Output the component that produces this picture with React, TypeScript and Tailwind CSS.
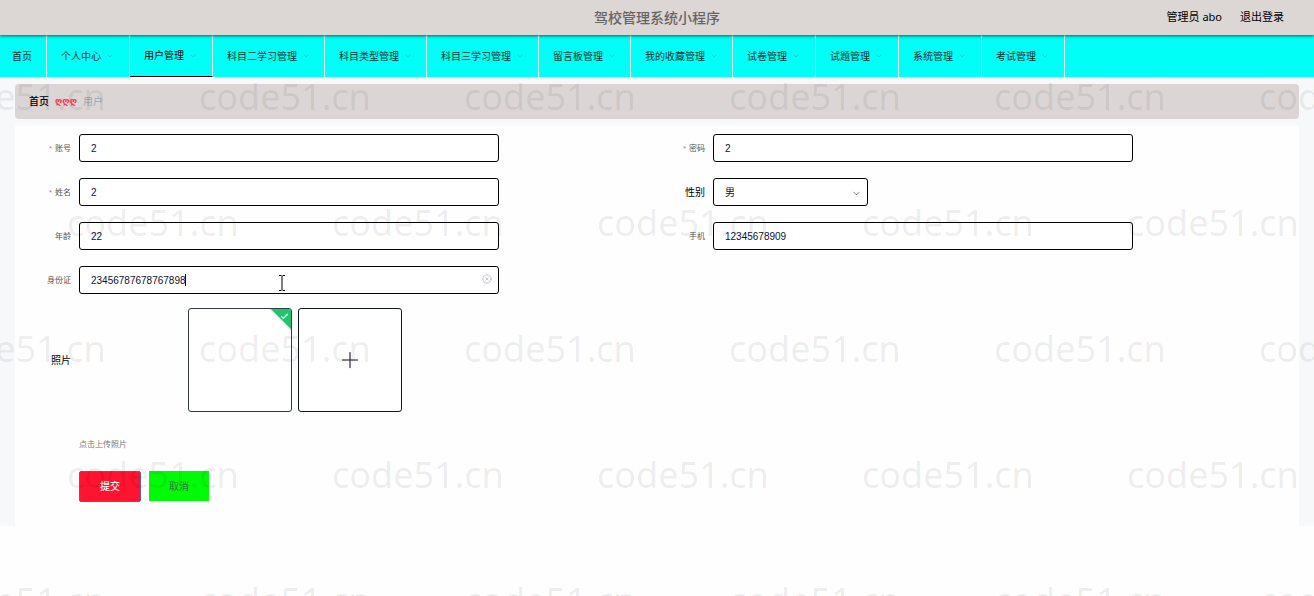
import { ReactNode } from "react";
import { Check, ChevronDown, CircleX, Plus } from "lucide-react";

const menus = [
  "个人中心",
  "用户管理",
  "科目二学习管理",
  "科目类型管理",
  "科目三学习管理",
  "留言板管理",
  "我的收藏管理",
  "试卷管理",
  "试题管理",
  "系统管理",
  "考试管理",
];

const inputClass =
  "h-7 w-full rounded-[3px] border border-black bg-white px-[11px] font-['Liberation_Sans','Noto_Sans_CJK_SC',sans-serif] text-[10px] text-[#101030] outline-none";

function Row({
  id,
  label,
  required,
  strong,
  children,
}: {
  id: string;
  label: string;
  required?: boolean;
  strong?: boolean;
  children: ReactNode;
}) {
  return (
    <div className="flex items-center gap-2">
      <label
        htmlFor={id}
        className={
          strong
            ? "w-14 shrink-0 text-right text-[10px] text-black"
            : "w-14 shrink-0 text-right text-[8px] text-[#555]"
        }
      >
        {required && (
          <span className="mr-[3px] font-['Liberation_Sans',sans-serif] text-[#f56c6c]">*</span>
        )}
        {label}
      </label>
      {children}
    </div>
  );
}

function TextField({
  id,
  label,
  value,
  required,
}: {
  id: string;
  label: string;
  value: string;
  required?: boolean;
}) {
  return (
    <Row id={id} label={label} required={required}>
      <div className="w-full max-w-[420px]">
        <input id={id} defaultValue={value} className={inputClass} />
      </div>
    </Row>
  );
}

function Watermark() {
  return (
    <div
      aria-hidden="true"
      className="pointer-events-none absolute inset-0 overflow-hidden pt-[34px] font-['Noto_Sans',sans-serif] text-[36px] leading-[126px] text-black/[0.08]"
    >
      {[0, 1, 2, 3, 4].map((row) => (
        <div
          key={row}
          className={row % 2 ? "ml-[67px] flex" : "-ml-[66px] flex"}
        >
          {[0, 1, 2, 3, 4, 5].slice(0, row % 2 ? 5 : 6).map((n) => (
            <span key={n} className="w-[265px] shrink-0">
              code51.cn
            </span>
          ))}
        </div>
      ))}
    </div>
  );
}

export default function App() {
  return (
    <div className="relative min-h-screen overflow-hidden bg-[#fefefe] font-['Noto_Sans','Noto_Sans_CJK_SC',sans-serif] text-[10px] text-black">
      <header className="relative z-10 grid h-[35px] grid-cols-[1fr_auto_1fr] items-center bg-[#dcd6d5] px-[30px] shadow-[0_1px_3px_rgba(0,0,0,0.6)]">
        <h1 className="col-start-2 text-[14px] font-medium text-[#686464]">驾校管理系统小程序</h1>
        <div className="flex justify-end gap-[18px] text-[11px]">
          <span>管理员 abo</span>
          <a href="#logout">退出登录</a>
        </div>
      </header>

      <nav className="flex h-[42px] bg-[#00fff6] text-[#103030]">
        <a href="#home" className="flex items-center border-r border-white/90 pr-3.5 pl-3">
          首页
        </a>
        {menus.map((name) => (
          <a
            key={name}
            href={"#" + name}
            className={
              name === "用户管理"
                ? "flex min-w-[83px] items-center gap-[5px] border-r border-b border-r-white/90 border-b-black px-[14px] text-black"
                : "flex min-w-[83px] items-center gap-[5px] border-r border-white/90 px-[14px]"
            }
          >
            {name}
            <ChevronDown size={8} strokeWidth={2} className="shrink-0 text-[#10bcc6]" />
          </a>
        ))}
      </nav>

      <main className="bg-[#f6f8fa] px-[15px] pt-[7px]">
        <div className="flex h-[35px] items-center rounded bg-[#dbd5d5] px-[14px]">
          <a href="#home" className="font-medium">首页</a>
          <span className="mx-[6px] font-['DejaVu_Sans',sans-serif] text-[9px] font-bold text-[#ff3355]">ღღღ</span>
          <span className="text-[#a3a7b5]">用户</span>
        </div>

        <form className="mt-[7px] bg-[#fefefe] pt-2 pr-4 pb-6" onSubmit={(e) => e.preventDefault()}>
          <div className="grid grid-cols-2 gap-y-4">
            <TextField id="account" label="账号" value="2" required />
            <TextField id="password" label="密码" value="2" required />
            <TextField id="name" label="姓名" value="2" required />
            <Row id="gender" label="性别" strong>
              <div className="relative w-[155px]">
                <select id="gender" defaultValue="男" className={inputClass + " appearance-none"}>
                  <option>男</option>
                  <option>女</option>
                </select>
                <ChevronDown
                  size={11}
                  strokeWidth={2}
                  className="pointer-events-none absolute top-[10px] right-[6px] text-[#777]"
                />
              </div>
            </Row>
            <TextField id="age" label="年龄" value="22" />
            <TextField id="phone" label="手机" value="12345678909" />
            <Row id="idcard" label="身份证">
              <div className="relative w-full max-w-[420px]">
                <input id="idcard" defaultValue="23456787678767898" className={inputClass} />
                <span className="absolute top-2 left-[106px] h-3 w-px bg-black" />
                <svg viewBox="0 0 8 18" className="absolute top-2 left-[199px] h-[18px] w-2" fill="none" stroke="#000">
                  <path d="M1 1.500h2.500M4.500 1.500H7M4 2v14M1 16.500h2.500M4.500 16.500H7" />
                </svg>
                <button type="button" aria-label="清空" className="absolute top-2 right-[7px] text-[#b5b9c4]">
                  <CircleX size={10} strokeWidth={2} />
                </button>
              </div>
            </Row>
          </div>

          <div className="mt-[14px] flex items-center gap-2">
            <label htmlFor="photo" className="w-14 shrink-0 text-right">
              照片
            </label>
            <div className="ml-[109px] flex gap-[6px]">
              <div className="relative size-[104px] overflow-hidden rounded-[3px] border border-[#333a45] bg-white">
                <div className="absolute -top-[11px] -right-[18px] h-6 w-10 rotate-45 bg-[#22c56e] shadow-[0_0_3px_rgba(0,0,0,0.3)]" />
                <Check size={9} strokeWidth={3} className="absolute top-[3px] right-[2px] text-white" />
              </div>
              <label
                htmlFor="photo"
                className="flex size-[104px] cursor-pointer items-center justify-center rounded-[3px] border border-[#101525] bg-white"
              >
                <Plus size={26} strokeWidth={1} className="text-[#1b1020]" />
                <input id="photo" type="file" className="sr-only" />
              </label>
            </div>
          </div>

          <p className="mt-[26px] ml-16 text-[8px] leading-3 text-[#777]">点击上传照片</p>

          <div className="mt-[21px] ml-16 flex gap-2">
            <button type="submit" className="h-[31px] w-[62px] rounded-[2px] border border-[#6b55b5] bg-[#ff142f] font-medium text-white">
              提交
            </button>
            <button type="button" className="h-[30px] w-[60px] bg-[#00fb08] text-[#38783a]">
              取消
            </button>
          </div>
        </form>
      </main>

      <Watermark />
    </div>
  );
}
